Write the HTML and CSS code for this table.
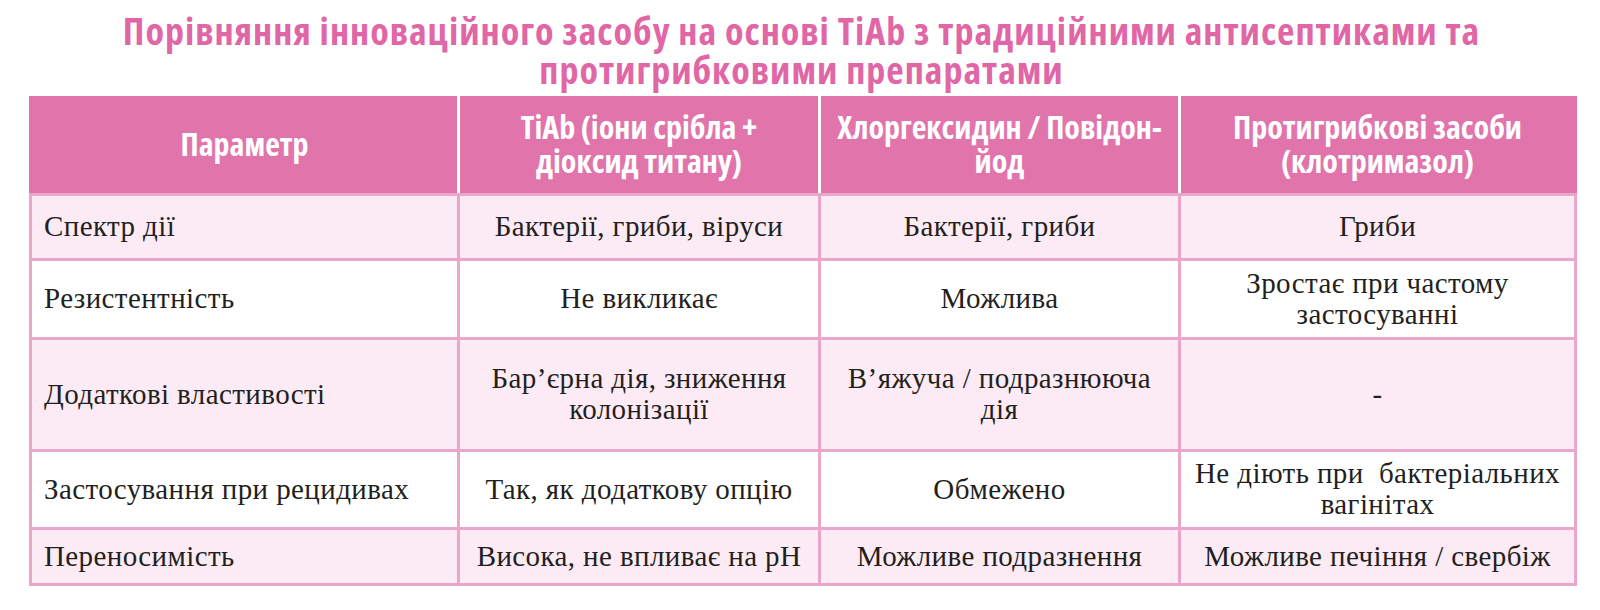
FILE: index.html
```html
<!DOCTYPE html>
<html lang="uk">
<head>
<meta charset="utf-8">
<title>Порівняння</title>
<link rel="stylesheet" href="styles.css">
</head>
<body>
<div class="page">
  <h1 class="title">Порівняння інноваційного засобу на основі TiAb з традиційними антисептиками та<br>протигрибковими препаратами</h1>
  <table class="cmp">
    <colgroup>
      <col class="c1"><col class="c2"><col class="c3"><col class="c4">
    </colgroup>
    <thead>
      <tr class="rh">
        <th>Параметр</th>
        <th>TiAb (іони срібла +<br>діоксид титану)</th>
        <th>Хлоргексидин / Повідон-<br>йод</th>
        <th>Протигрибкові засоби<br>(клотримазол)</th>
      </tr>
    </thead>
    <tbody>
      <tr class="r1 alt">
        <td>Спектр дії</td>
        <td>Бактерії, гриби, віруси</td>
        <td>Бактерії, гриби</td>
        <td>Гриби</td>
      </tr>
      <tr class="r2">
        <td>Резистентність</td>
        <td>Не викликає</td>
        <td>Можлива</td>
        <td>Зростає при частому<br>застосуванні</td>
      </tr>
      <tr class="r3 alt">
        <td>Додаткові властивості</td>
        <td>Бар’єрна дія, зниження<br>колонізації</td>
        <td>В’яжуча / подразнююча<br>дія</td>
        <td>-</td>
      </tr>
      <tr class="r4">
        <td>Застосування при рецидивах</td>
        <td>Так, як додаткову опцію</td>
        <td>Обмежено</td>
        <td>Не діють при &nbsp;бактеріальних<br>вагінітах</td>
      </tr>
      <tr class="r5 alt">
        <td>Переносимість</td>
        <td>Висока, не впливає на рН</td>
        <td>Можливе подразнення</td>
        <td>Можливе печіння / свербіж</td>
      </tr>
    </tbody>
  </table>
</div>
</body>
</html>
```

FILE: styles.css
```css
html, body {
  margin: 0;
  padding: 0;
  background: #ffffff;
}

.page {
  padding: 11px 0 0 29px;
  width: 1545px;
}

.title {
  margin: 0 0 7px 0;
  text-align: center;
  color: #e066a5;
  font-family: "Open Sans", "Liberation Sans", sans-serif;
  font-stretch: 75%;
  font-weight: bold;
  font-size: 38px;
  letter-spacing: 1px;
  line-height: 39px;
}

.cmp {
  border-collapse: collapse;
  width: 1545px;
  table-layout: fixed;
}

.c1 { width: 428px; }
.c2 { width: 361px; }
.c3 { width: 360px; }
.c4 { width: 396px; }

.cmp th {
  background: #e175ab;
  color: #ffffff;
  font-family: "Open Sans", "Liberation Sans", sans-serif;
  font-stretch: 75%;
  font-weight: bold;
  font-size: 32px;
  line-height: 34px;
  text-align: center;
  vertical-align: middle;
  white-space: nowrap;
  padding: 0;
  border-left: 3px solid #ffffff;
  border-right: 3px solid #ffffff;
  border-top: 0;
  border-bottom: 3px solid #eaa7c9;
}

.cmp th:first-child { border-left: 3px solid #e175ab; }
.cmp th:last-child { border-right: 3px solid #e175ab; }

.rh { height: 98px; }
.r1 { height: 65px; }
.r2 { height: 79px; }
.r3 { height: 112px; }
.r4 { height: 78px; }
.r5 { height: 56px; }

.cmp td {
  border: 3px solid #eaa7c9;
  font-family: "Liberation Serif", "Times New Roman", serif;
  font-size: 29px;
  letter-spacing: 0.4px;
  line-height: 31px;
  color: #231f20;
  text-align: center;
  vertical-align: middle;
  padding: 0 4px;
  background: #ffffff;
}

.cmp td:first-child {
  text-align: left;
  padding-left: 12px;
}

.cmp .alt td { background: #fcebf4; }
```
